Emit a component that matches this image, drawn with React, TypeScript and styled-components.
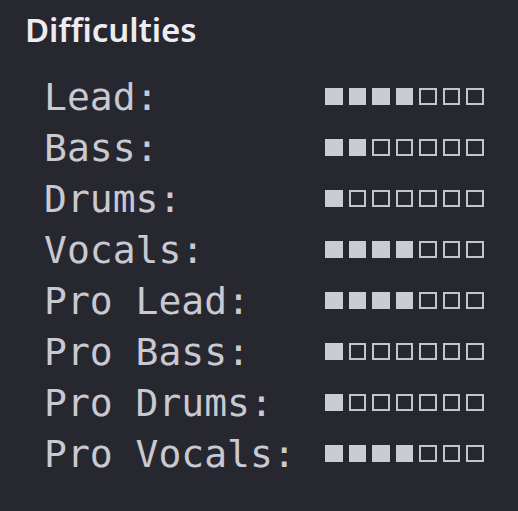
import React from "react";
import styled, { createGlobalStyle } from "styled-components";

const GlobalStyle = createGlobalStyle`
  html, body {
    margin: 0;
    padding: 0;
    background: #272730;
  }
`;

const difficulties = [
  { name: "Lead", level: 4 },
  { name: "Bass", level: 2 },
  { name: "Drums", level: 1 },
  { name: "Vocals", level: 4 },
  { name: "Pro Lead", level: 4 },
  { name: "Pro Bass", level: 1 },
  { name: "Pro Drums", level: 1 },
  { name: "Pro Vocals", level: 4 },
];

const MAX = 7;

function App() {
  return (
    <>
      <GlobalStyle />
      <Panel>
        <Title>Difficulties</Title>
        <List>
          {difficulties.map((d) => (
            <Row key={d.name}>
              <Label>{d.name + ":"}</Label>
              <Meter aria-label={`${d.level} of ${MAX}`}>
                {Array.from({ length: MAX }, (_, i) => (
                  <Pip key={i} $filled={i < d.level} />
                ))}
              </Meter>
            </Row>
          ))}
        </List>
      </Panel>
    </>
  );
}

const Panel = styled.div`
  width: 518px;
  height: 511px;
  box-sizing: border-box;
  padding: 13px 0 0 25px;
  background: #272730;
  display: flex;
  flex-direction: column;
`;

const Title = styled.h2`
  margin: 0;
  font-family: "Noto Sans", "Open Sans", sans-serif;
  font-weight: 600;
  font-size: 33px;
  line-height: 33px;
  color: #ececf1;
  letter-spacing: -0.1px;
`;

const List = styled.div`
  margin-top: 26px;
  padding-left: 19px;
  display: flex;
  flex-direction: column;
`;

const Row = styled.div`
  display: flex;
  align-items: center;
  font-family: "DejaVu Sans Mono", "Liberation Mono", monospace;
  font-size: 38px;
  line-height: 51px;
  color: #c9c9d1;
  white-space: pre;
`;

const Label = styled.span`
  width: 281px;
  flex: none;
`;

const Meter = styled.span`
  display: flex;
  gap: 6px;
  margin-bottom: 2px;
`;

const Pip = styled.span<{ $filled: boolean }>`
  width: 17.5px;
  height: 17.5px;
  box-sizing: border-box;
  background: ${(p) => (p.$filled ? "#cbcbd3" : "transparent")};
  border: ${(p) => (p.$filled ? "none" : "2.5px solid #c4c4cc")};
`;

export default App;
